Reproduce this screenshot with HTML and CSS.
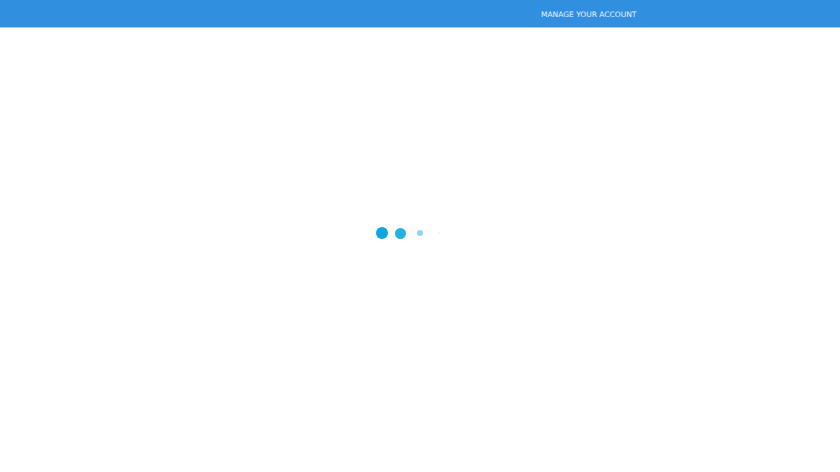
FILE: index.html
```
<!DOCTYPE html>
<html>
<head>
<meta charset="utf-8">
<link rel="stylesheet" href="styles.css">
</head>
<body>
<header class="topbar">
  <nav class="nav"><a class="nav-link" href="#">MANAGE YOUR ACCOUNT</a></nav>
</header>
<main class="stage">
  <div class="loader">
    <span class="dot d1"></span>
    <span class="dot d2"></span>
    <span class="dot d3"></span>
    <span class="dot d4"></span>
  </div>
</main>
</body>
</html>
```
FILE: styles.css
```
html, body { margin: 0; padding: 0; background: #fff; font-family: "DejaVu Sans", sans-serif; }
.topbar {
  height: 27px;
  background: #318fe0;
  border-bottom: 1px solid #9fcbf2;
  display: flex;
  align-items: center;
}
.nav { padding-left: 541px; padding-bottom: 1px; line-height: 10px; }
.nav-link { color: #e6f0fb; text-decoration: none; font-size: 7.5px; }
.stage { height: 444px; display: flex; justify-content: center; padding-top: 199px; box-sizing: border-box; }
.loader { display: flex; align-items: center; height: 12px; margin-right: 25px; }
.dot { display: block; border-radius: 50%; background: #0ea5e0; }
.d1 { width: 12px; height: 12px; }
.d2 { width: 11px; height: 11px; margin-left: 7px; background: #25b0e4; }
.d3 { width: 6px; height: 6px; margin-left: 11px; background: #8fd6f2; }
.d4 { width: 2px; height: 2px; margin-left: 15px; background: #e3f5fc; }
```
